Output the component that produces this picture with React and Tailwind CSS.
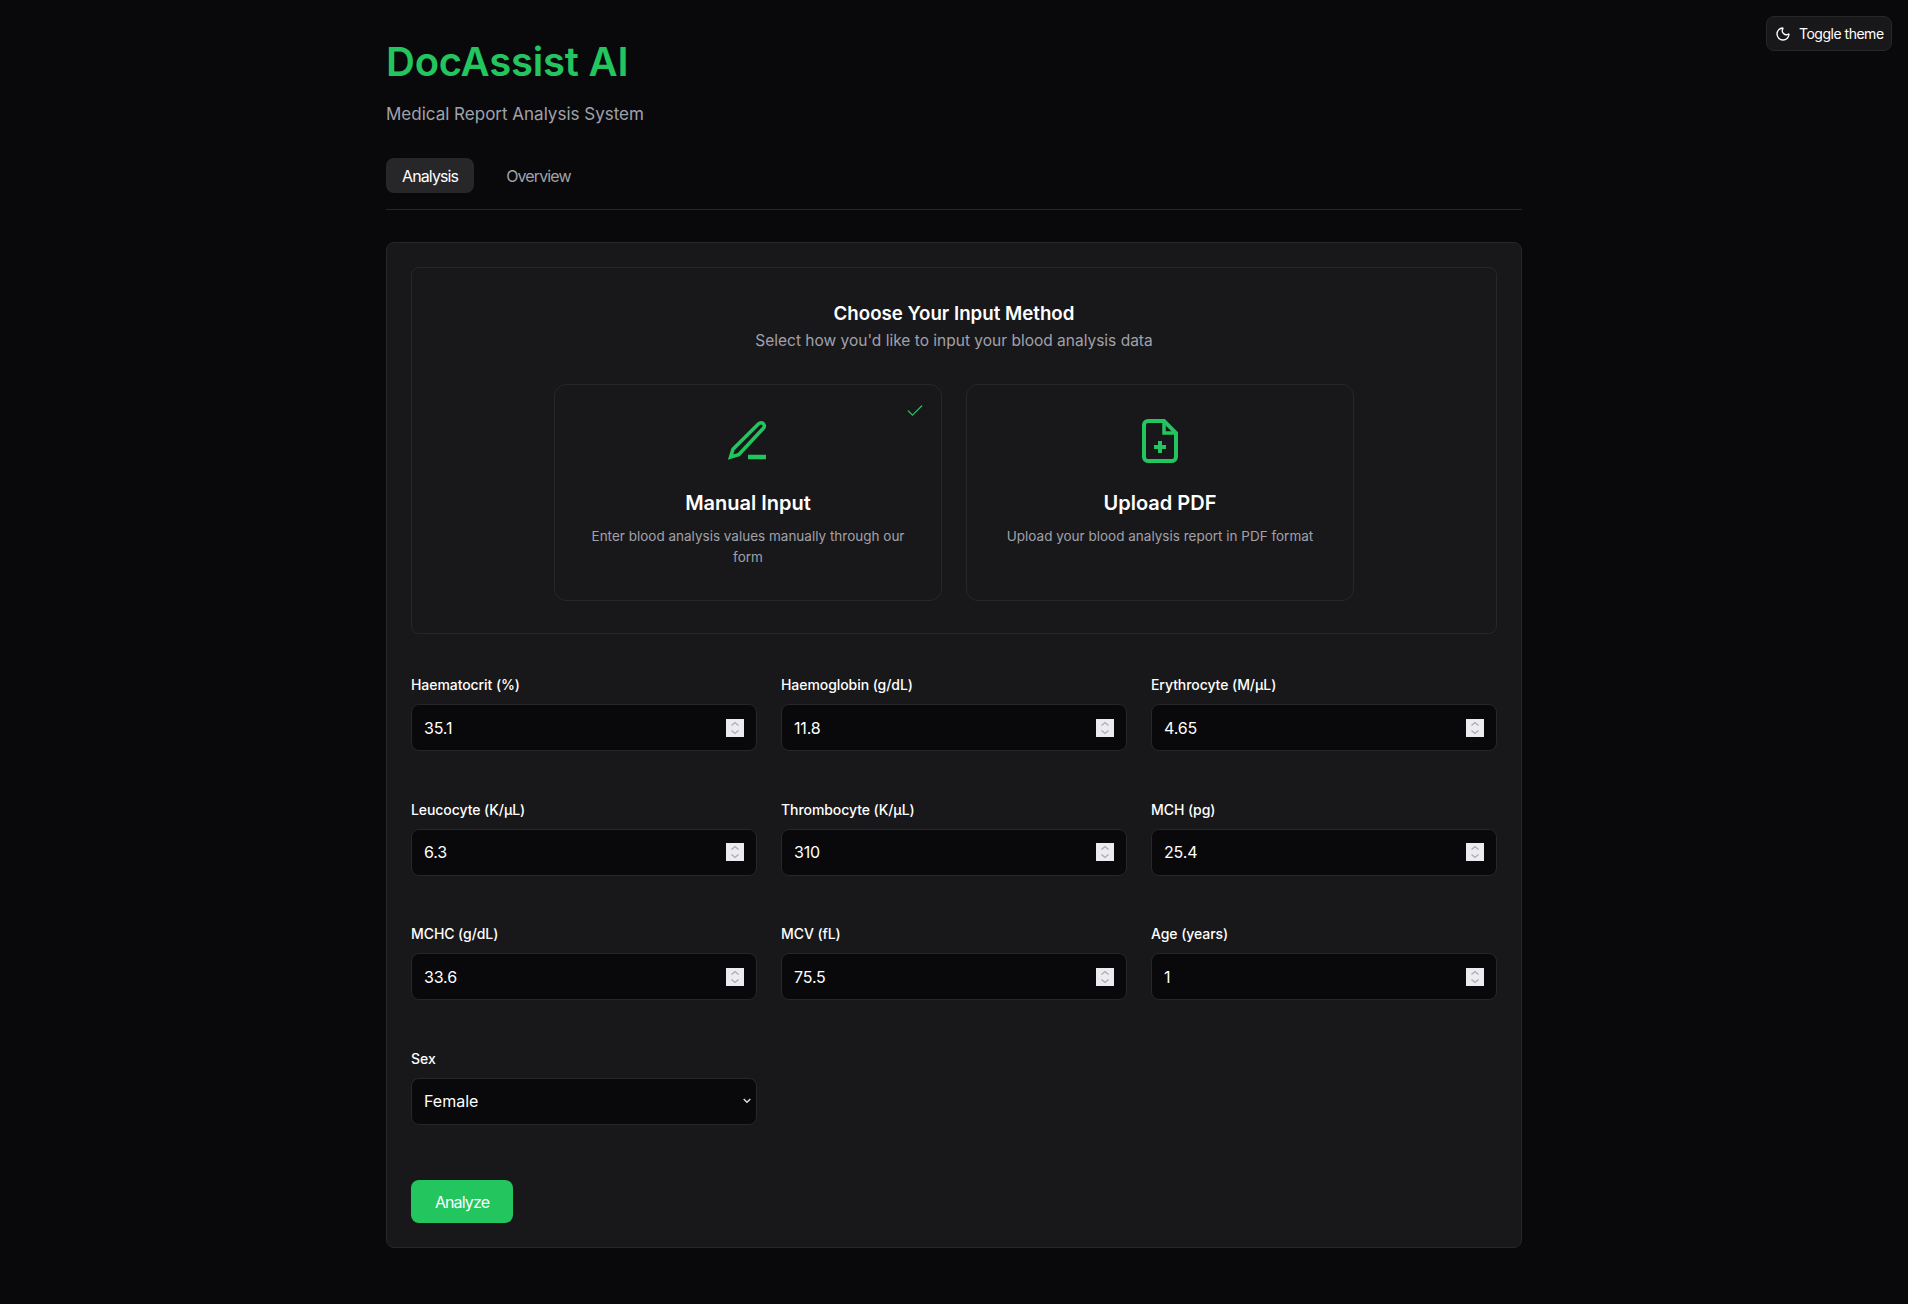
import React from 'react';
import { Moon, Check } from 'lucide-react';

const fields = [
  { label: 'Haematocrit (%)', value: '35.1' },
  { label: 'Haemoglobin (g/dL)', value: '11.8' },
  { label: 'Erythrocyte (M/µL)', value: '4.65' },
  { label: 'Leucocyte (K/µL)', value: '6.3' },
  { label: 'Thrombocyte (K/µL)', value: '310' },
  { label: 'MCH (pg)', value: '25.4' },
  { label: 'MCHC (g/dL)', value: '33.6' },
  { label: 'MCV (fL)', value: '75.5' },
  { label: 'Age (years)', value: '1' },
];

const PenIcon = () => (
  <svg width="48" height="48" viewBox="0 0 48 48" fill="none" stroke="currentColor">
    <path d="M34.65 7.65L9 33.3L6.6 41L14.7 38.7L39.35 12.35A3.32 3.32 0 0 0 34.65 7.65Z" strokeWidth="3.6" />
    <path d="M24 41H42" strokeWidth="4.5" />
  </svg>
);

const FileIcon = () => (
  <svg width="48" height="48" viewBox="0 0 48 48" fill="none" stroke="currentColor" strokeWidth="4">
    <path d="M28 5H12a4 4 0 0 0-4 4V41a4 4 0 0 0 4 4H36a4 4 0 0 0 4-4V17Z" />
    <path d="M28 5V17H40" strokeWidth="3.5" />
    <path d="M24 25V37M18 31H30" />
  </svg>
);

const Spinner = () => (
  <svg width="18" height="18" viewBox="0 0 18 18" fill="none" className="shrink-0 bg-[#ececf0]">
    <path d="M5.5 6.5L9 3.5L12.5 6.5M5.5 11.5L9 14.5L12.5 11.5" stroke="#a9a9b4" strokeWidth="1.3" />
  </svg>
);

const MethodCard = ({ icon, title, text, selected }) => (
  <div className="relative h-[217px] rounded-xl border border-[#27272a] px-6 pt-[31px] text-center">
    {selected && <Check strokeWidth={1.5} className="absolute right-4 top-4 h-5 w-5 text-[#22c55e]" />}
    <div className="flex justify-center text-[#22c55e]">{icon}</div>
    <h3 className="mt-[25px] text-xl leading-7 font-semibold text-white">{title}</h3>
    <p className="mt-[9px] text-[13.5px] leading-[21px] text-[#a1a1aa]">{text}</p>
  </div>
);

const App = () => {
  return (
    <div className="relative min-h-[1304px] bg-[#09090b] font-['Inter',sans-serif] text-white">
      <button className="absolute right-4 top-4 flex h-[35px] w-[126px] items-center gap-2 rounded-lg border border-[#27272a] bg-[#18181b] pl-[8px] text-sm tracking-[-0.035em]">
        <Moon className="h-4 w-4" />
        Toggle theme
      </button>

      <div className="mx-auto w-[1136px] pt-[40px]">
        <h1 className="text-[40px] leading-[44px] font-semibold tracking-[-0.005em] text-[#22c55e]">DocAssist AI</h1>
        <p className="mt-[16px] text-[17px] leading-7 text-[#a1a1aa]">Medical Report Analysis System</p>

        <div className="mt-[30px] flex gap-4 border-b border-[#27272a] pb-4">
          <button className="h-[35px] rounded-lg bg-[#27272a] px-4 text-base tracking-[-0.055em] text-white">Analysis</button>
          <button className="h-[35px] rounded-lg px-4 text-base tracking-[-0.055em] text-[#a1a1aa]">Overview</button>
        </div>

        <div className="mt-[32px] rounded-lg border border-[#27272a] bg-[#18181b] p-6">
          <div className="rounded-lg border border-[#27272a] px-6 pt-[32px] pb-[32px]">
            <div className="text-center">
              <h2 className="text-[18.7px] leading-7 font-semibold">Choose Your Input Method</h2>
              <p className="mt-px text-[15.5px] leading-6 text-[#a1a1aa]">Select how you'd like to input your blood analysis data</p>
            </div>
            <div className="mx-auto mt-[31px] grid w-[800px] grid-cols-2 gap-6">
              <MethodCard
                selected
                icon={<PenIcon />}
                title="Manual Input"
                text="Enter blood analysis values manually through our form"
              />
              <MethodCard
                icon={<FileIcon />}
                title="Upload PDF"
                text="Upload your blood analysis report in PDF format"
              />
            </div>
          </div>

          <div className="mt-[41px] grid grid-cols-3 gap-x-6 gap-y-[48.5px]">
            {fields.map((field) => (
              <div key={field.label}>
                <label className="mb-[9px] block text-sm leading-5 font-medium tracking-[-0.005em]">{field.label}</label>
                <div className="flex h-[47px] items-center rounded-lg border border-[#27272a] bg-[#09090b] pl-3 pr-3">
                  <input
                    type="text"
                    defaultValue={field.value}
                    className="min-w-0 flex-1 bg-transparent text-base tracking-[-0.01em] text-white outline-none"
                  />
                  <Spinner />
                </div>
              </div>
            ))}
            <div>
              <label className="mb-[9px] block text-sm leading-5 font-medium">Sex</label>
              <div className="relative">
                <select
                  defaultValue="Female"
                  className="h-[47px] w-full appearance-none rounded-lg border border-[#27272a] bg-[#09090b] px-3 text-base text-white outline-none"
                >
                  <option>Male</option>
                  <option>Female</option>
                </select>
                <svg width="8" height="6" viewBox="0 0 8 6" fill="none" className="absolute right-[6px] top-[20px]">
                  <path d="M0.7 1L4 4.3L7.3 1" stroke="#e4e4e7" strokeWidth="1.3" />
                </svg>
              </div>
            </div>
          </div>

          <button className="mt-[55.5px] block h-[43px] w-[102px] rounded-lg bg-[#22c55e] text-base tracking-[-0.055em] text-white">Analyze</button>
        </div>
      </div>
    </div>
  );
};

export default App;
